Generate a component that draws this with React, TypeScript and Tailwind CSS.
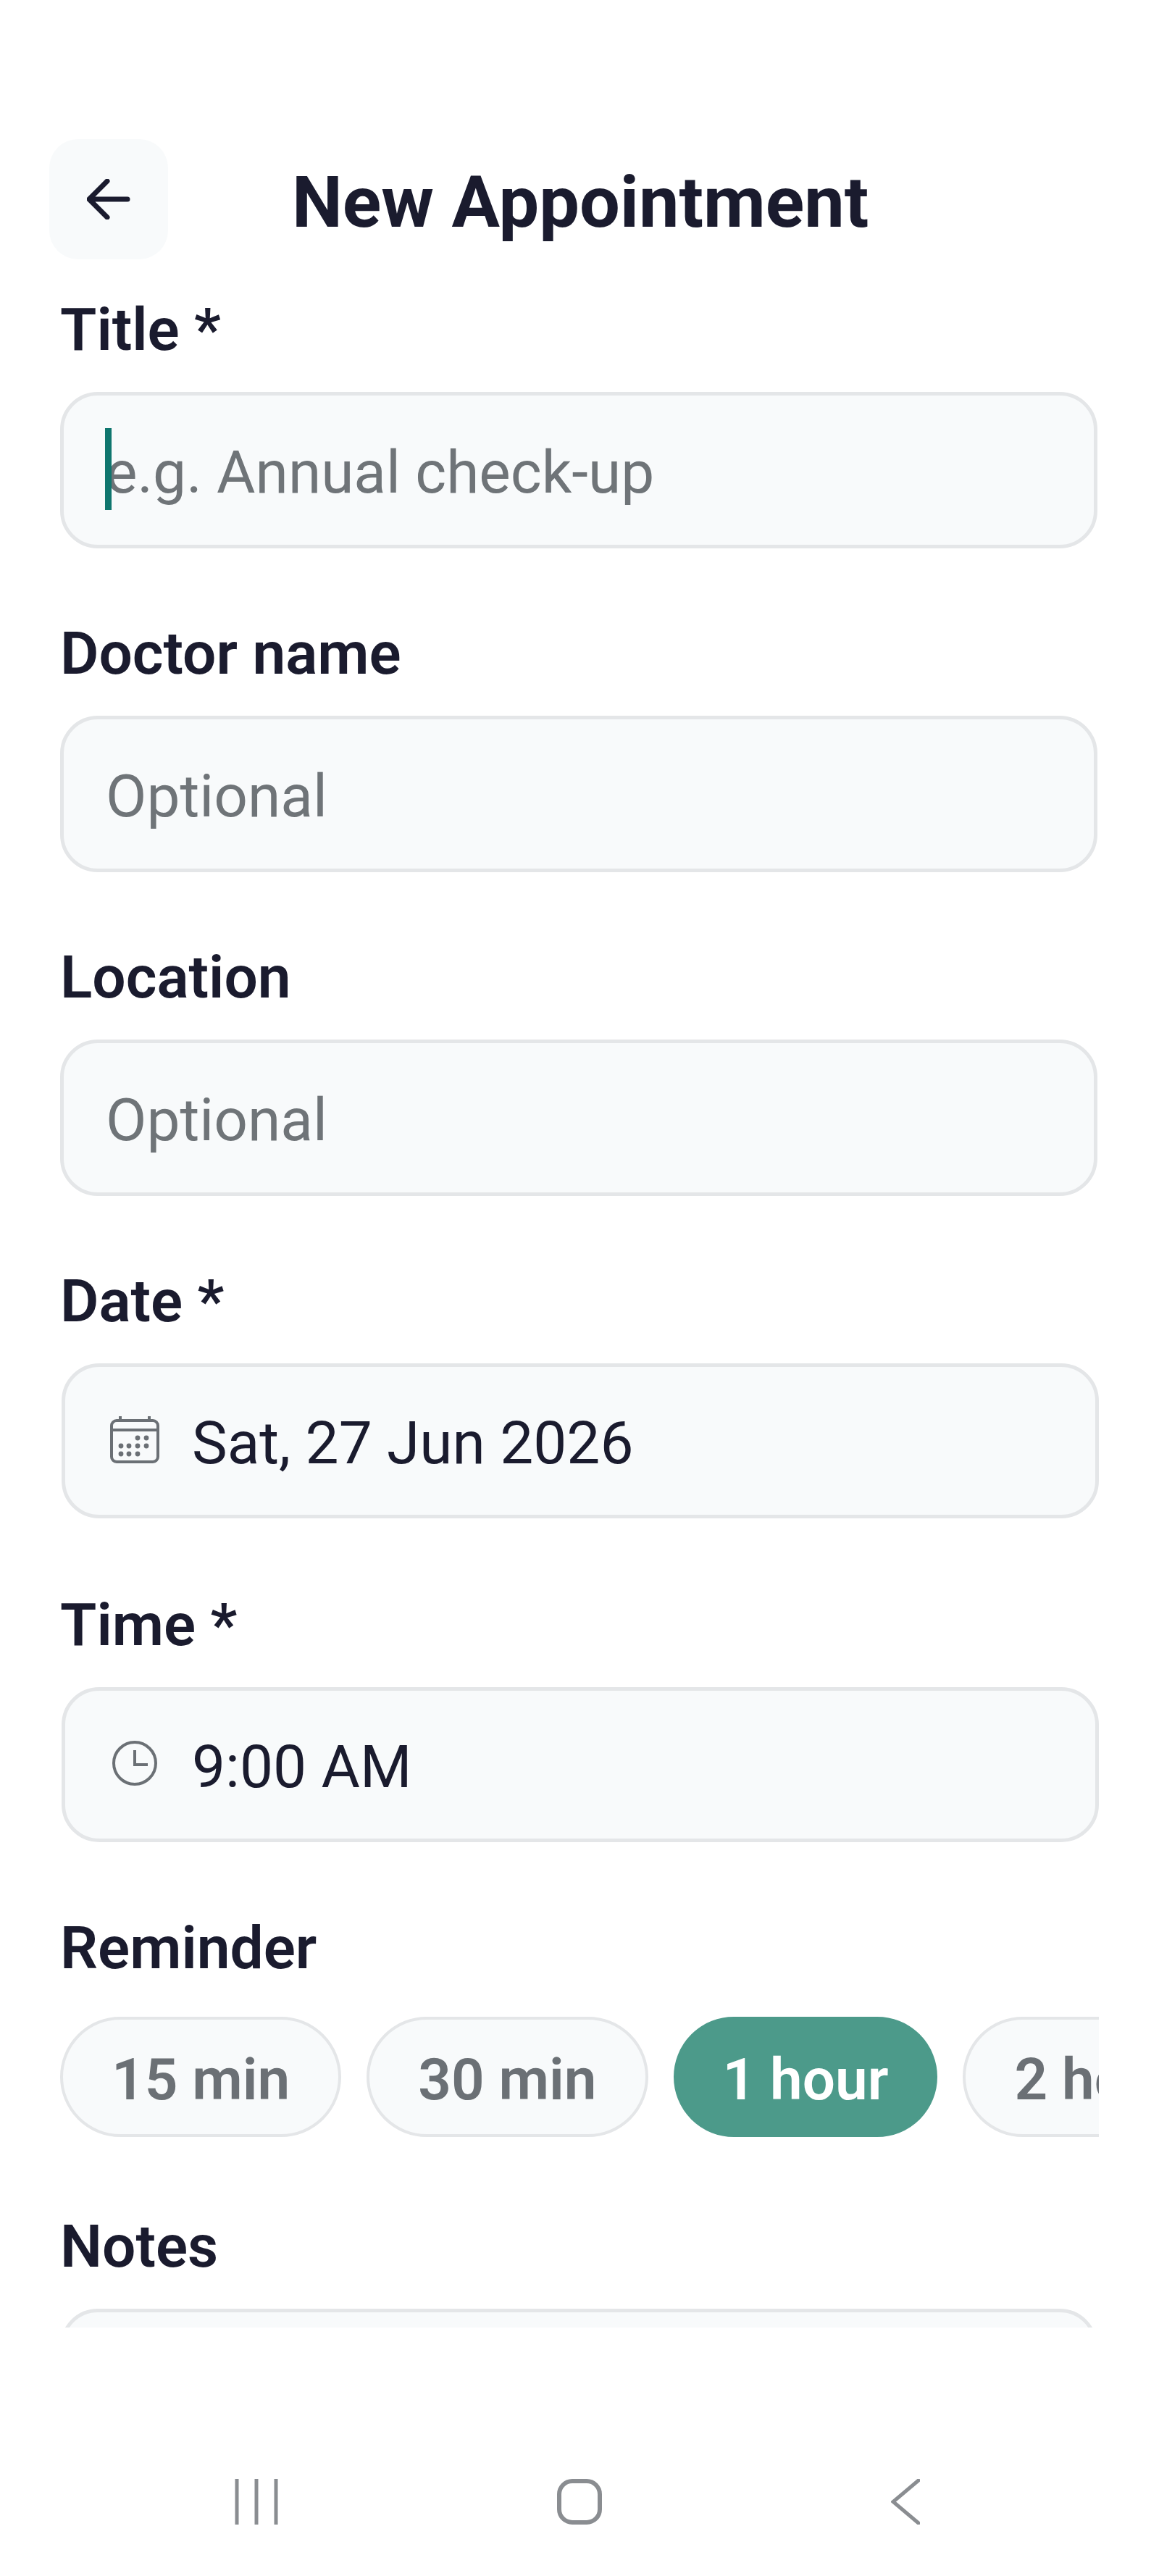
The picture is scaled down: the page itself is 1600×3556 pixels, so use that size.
import React from "react";

const labelFont = "font-['Roboto',sans-serif] font-semibold text-[#1a1b2e] text-[82px] leading-[92px]";
const valueFont = "font-['Roboto',sans-serif] text-[82px] leading-[96px] pt-[5px]";

function Label({ children }: { children: React.ReactNode }) {
  return <div className={labelFont}>{children}</div>;
}

function Box({ children }: { children?: React.ReactNode }) {
  return (
    <div className="mr-[2px] mt-[40px] flex h-[216px] shrink-0 items-center rounded-[52px] border-[5px] border-[#e4e6e8] bg-[#f8fafb] pl-[58px]">
      {children}
    </div>
  );
}

// date and time boxes sit 2px further right and are a touch shorter
function PickerBox({ children }: { children: React.ReactNode }) {
  return (
    <div className="mb-[2px] ml-[2px] mt-[40px] flex h-[214px] shrink-0 items-center rounded-[52px] border-[5px] border-[#e4e6e8] bg-[#f8fafb] pl-[60px]">
      {children}
    </div>
  );
}

function CalendarIcon() {
  return (
    <svg width="68" height="66" viewBox="0 0 68 66" fill="none" stroke="#6b7075" strokeWidth="4" className="ml-[2px] mr-[45px] mt-[-4px]">
      <rect x="2" y="7" width="64" height="57" rx="7" />
      <path d="M2 20h64M14 1v6M54 1v6" />
      <g fill="#6b7075" stroke="none">
        <circle cx="38" cy="31" r="3.4" />
        <circle cx="50" cy="31" r="3.4" />
        <circle cx="15" cy="42" r="3.4" />
        <circle cx="26" cy="42" r="3.4" />
        <circle cx="38" cy="42" r="3.4" />
        <circle cx="50" cy="42" r="3.4" />
        <circle cx="15" cy="53" r="3.4" />
        <circle cx="26" cy="53" r="3.4" />
        <circle cx="38" cy="53" r="3.4" />
      </g>
    </svg>
  );
}

function ClockIcon() {
  return (
    <svg width="64" height="64" viewBox="0 0 64 64" fill="none" stroke="#6b7075" strokeWidth="4" className="ml-[4px] mr-[47px] mt-[-4px]">
      <circle cx="32" cy="32" r="29" />
      <path d="M32 14v20h18" />
    </svg>
  );
}

function Chip({ children, active }: { children: React.ReactNode; active?: boolean }) {
  return (
    <div
      className={
        active
          ? "flex h-[166px] shrink-0 items-center rounded-full border-[4px] border-[#4c9a8a] bg-[#4c9a8a] px-[64px] pt-[8px] font-['Roboto',sans-serif] text-[80px] font-semibold text-white"
          : "flex h-[166px] shrink-0 items-center rounded-full border-[4px] border-[#e4e6e8] bg-[#f8fafb] px-[67px] pt-[8px] font-['Roboto',sans-serif] text-[80px] font-semibold text-[#6b7075]"
      }
    >
      {children}
    </div>
  );
}

export default function App() {
  return (
    <div className="flex h-[3556px] w-[1600px] flex-col overflow-hidden bg-white">
      {/* Header */}
      <div className="ml-[68px] mt-[192px] flex items-center">
        <button className="flex h-[166px] w-[164px] items-center justify-center rounded-[40px] bg-[#f8fafb]">
          <svg width="60" height="56" viewBox="0 0 60 56" fill="none" stroke="#1a1b2e" strokeWidth="7" strokeLinecap="round" strokeLinejoin="round">
            <path d="M56 28H4M28 3 3 28l25 25" />
          </svg>
        </button>
        <h1 className="ml-[171px] pt-[8px] font-['Roboto',sans-serif] text-[99px] font-bold leading-[116px] text-[#1a1b2e]">New Appointment</h1>
      </div>

      {/* Form, cut off by the scroll area */}
      <div className="ml-[83px] mt-[37px] h-[2818px] w-[1434px] shrink-0 grow-0 overflow-hidden pt-[14px]">
        <div className="flex flex-col">
          <Label>Title *</Label>
          <Box>
            <span className={`${valueFont} relative text-[#6f7478]`}>
              <span className="absolute left-[-1px] top-[-8px] h-[113px] w-[9px] bg-[#0f766e]" />
              e.g. Annual check-up
            </span>
          </Box>

          <div className="mt-[99px]">
            <Label>Doctor name</Label>
          </div>
          <Box>
            <span className={`${valueFont} text-[#6f7478]`}>Optional</span>
          </Box>

          <div className="mt-[99px]">
            <Label>Location</Label>
          </div>
          <Box>
            <span className={`${valueFont} text-[#6f7478]`}>Optional</span>
          </Box>

          <div className="mt-[99px]">
            <Label>Date *</Label>
          </div>
          <PickerBox>
            <CalendarIcon />
            <span className={`${valueFont} text-[#1a1b2e]`}>Sat, 27 Jun 2026</span>
          </PickerBox>

          <div className="mt-[99px]">
            <Label>Time *</Label>
          </div>
          <PickerBox>
            <ClockIcon />
            <span className={`${valueFont} text-[#1a1b2e]`}>9:00 AM</span>
          </PickerBox>

          <div className="mt-[98px]">
            <Label>Reminder</Label>
          </div>
          <div className="mt-[49px] flex gap-[35px] overflow-hidden">
            <Chip>15 min</Chip>
            <Chip>30 min</Chip>
            <Chip active>1 hour</Chip>
            <Chip>2 hours</Chip>
          </div>

          <div className="mt-[105px]">
            <Label>Notes</Label>
          </div>
          <Box />
        </div>
      </div>

      {/* Android navigation bar */}
      <div className="mx-[131px] mt-[209px] grid h-[63px] grid-cols-3 place-items-center">
        <svg width="60" height="63" viewBox="0 0 60 63" fill="none" stroke="#8a8d91" strokeWidth="5">
          <path d="M3 0v63M30 0v63M57 0v63" />
        </svg>
        <svg width="62" height="63" viewBox="0 0 62 63" fill="none" stroke="#8a8d91" strokeWidth="6">
          <rect x="3" y="3" width="56" height="57" rx="18" />
        </svg>
        <svg width="40" height="63" viewBox="0 0 40 63" fill="none" stroke="#8a8d91" strokeWidth="5" strokeLinecap="round" className="ml-[8px]">
          <path d="M38 2 3 31.5 38 61" />
        </svg>
      </div>
    </div>
  );
}
